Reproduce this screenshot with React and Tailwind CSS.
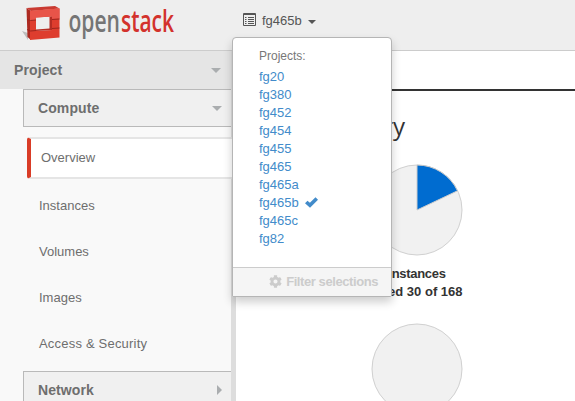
import { FaCog } from "react-icons/fa";

const projects = ["fg20", "fg380", "fg452", "fg454", "fg455", "fg465", "fg465a", "fg465b", "fg465c", "fg82"];

function Logo() {
  return (
    <svg className="block h-[50px] w-[190px] overflow-visible" viewBox="0 0 190 50">
      <path d="M22 31L28 33V40Z" fill="#bdbdbd" />
      <path d="M26.5 8L31 11V40L27.5 37Z" fill="#ad2a21" />
      <path d="M26.5 8L55 6L59.5 8.5L31 11Z" fill="#c93a31" />
      <path fillRule="evenodd" d="M30 11L59.5 8.5V37.5L30 40ZM36 17.5V31L52 30V16.5Z" fill="#de3d2e" />
      <path d="M30 11L59.5 8.5V18.5L52 19V16.5L36 17.5V20L30 20.5Z" fill="#e85449" />
      <path d="M49.5 17L52 16.5V30L36 31V29.5L49.5 28.5Z" fill="#b52d24" />
      <path d="M27 19.5L30.5 20.5L36 20M27 29.5L30.5 31L36 30.5M52 19.5L59.5 19M52 28.5L59.5 28" fill="none" stroke="#9c261e" />
      <text x="68.5" y="31.5" textLength="51.5" lengthAdjust="spacingAndGlyphs" fill="#757575" className="font-['Open_Sans',sans-serif] text-[31px] font-semibold">open</text>
      <text x="121" y="31.5" textLength="53" lengthAdjust="spacingAndGlyphs" fill="#d3322c" className="font-['Open_Sans',sans-serif] text-[31px] font-semibold">stack</text>
    </svg>
  );
}

function ProjectMenu() {
  return (
    <div className="absolute left-[232px] top-[37px] flex h-[260px] w-[160px] flex-col rounded-t-[4px] rounded-b-[2px] border border-[#b5b5b5] bg-white bg-clip-padding shadow-[0_5px_10px_rgba(0,0,0,0.2)]">
      <div className="pl-[26px] pt-[9px] text-[12px] leading-[18px] text-[#777]">Projects:</div>
      <ul className="flex-1 pl-[26px] pt-[3px]">
        {projects.map((name) => (
          <li key={name} className="flex h-[18px] items-center text-[13px] text-[#428bca]">
            {name}
            {name === "fg465b" && (
              <svg className="-mt-[2px] ml-[6px] h-[11px] w-[13px]" viewBox="0 0 13 11">
                <path d="M0 6.2L2.5 3.7L4.9 5.8L10.5 0.3L13 2.7L5 10.8Z" fill="#428bca" />
              </svg>
            )}
          </li>
        ))}
      </ul>
      <div className="flex h-[29px] items-center justify-end border-t border-[#ccc] bg-[#f5f5f5] pr-[13px] text-[13px] font-bold tracking-[-0.42px] text-[#ccc]">
        <FaCog className="-mt-[2px] mr-[4px] h-[13px] w-[13px]" />
        Filter selections
      </div>
    </div>
  );
}

function Quota({ used, children }) {
  return (
    <div className="flex w-[362px] flex-col items-center text-center text-[13px] font-bold leading-[18px] text-[#333]">
      <svg className="block h-[92px] w-[92px]" viewBox="0 0 92 92">
        <circle cx="46" cy="46" r="45" fill="#f1f1f1" stroke="#d0d0d0" />
        {used && <path d="M46 46V1A45 45 0 0 1 86.5 26.8Z" fill="#006cd0" stroke="#ccc" />}
      </svg>
      {children}
    </div>
  );
}

function SideHeading({ children, right }) {
  return (
    <div className="ml-[23px] flex h-[38px] shrink-0 items-center justify-between border border-r-0 border-[#b9b9b9] bg-[#f0f0f0] pl-[14px] pr-[9px] text-[14px] font-bold tracking-[0.1px] text-[#6e6e6e]">
      {children}
      {right ? (
        <span className="border-y-[5px] border-l-[5px] border-y-transparent border-l-[#aaadaf]" />
      ) : (
        <span className="border-x-[5px] border-t-[5px] border-x-transparent border-t-[#aaadaf]" />
      )}
    </div>
  );
}

export default function App() {
  return (
    <div className="relative flex h-[401px] w-[575px] flex-col overflow-hidden bg-white font-['Liberation_Sans',Arial,sans-serif]">
      <header className="flex h-[51px] shrink-0 border-b border-[#ccc] bg-[#eee]">
        <Logo />
        <div className="ml-[53px] flex h-[41px] items-center text-[13px] text-[#555]">
          <svg className="-mt-[2px] mr-[6px] h-[13px] w-[13px]" viewBox="0 0 13 13" fill="none" stroke="#555">
            <path d="M.5 .5H12.5V12.5H.5ZM.5 1.5H12.5M2 4.5H3.5M5 4.5H11M2 6.5H3.5M5 6.5H11M2 8.5H3.5M5 8.5H11M2 10.5H3.5M5 10.5H11" />
          </svg>
          <span className="mt-px">fg465b</span>
          <span className="ml-[6px] mt-[3px] border-x-[4px] border-t-[4px] border-x-transparent border-t-[#555]" />
        </div>
      </header>
      <div className="flex min-h-0 flex-1">
        <aside className="flex w-[236px] shrink-0 flex-col border-r-[5px] border-[#ddd] bg-[#f9f9f9]">
          <div className="flex h-[38px] shrink-0 items-center justify-between bg-[#e5e5e5] pl-[14px] pr-[10px] text-[14px] font-bold tracking-[0.1px] text-[#6e6e6e]">
            Project
            <span className="border-x-[5px] border-t-[5px] border-x-transparent border-t-[#aaadaf]" />
          </div>
          <SideHeading>Compute</SideHeading>
          <nav className="mt-[10px] flex shrink-0 flex-col text-[13px] text-[#6e6e6e]">
            <div className="-mr-[5px] ml-[27px] flex h-[42px] items-center rounded-l-[3px] border-y-2 border-l-4 border-y-[#e5e5e5] border-l-[#d93c27] bg-white pl-[10px]">Overview</div>
            <div className="mt-[4px] flex h-[46px] items-center pl-[39px]">Instances</div>
            <div className="flex h-[46px] items-center pl-[39px]">Volumes</div>
            <div className="flex h-[46px] items-center pl-[39px]">Images</div>
            <div className="flex h-[46px] items-center pl-[39px] tracking-[0.2px]">Access &amp; Security</div>
          </nav>
          <div className="mt-[4px]"><SideHeading right>Network</SideHeading></div>
        </aside>
        <main className="flex-1">
          <div className="h-[40px] border-b-2 border-[#333]" />
          <h1 className="mt-[19px] w-[167px] whitespace-nowrap text-right font-['Open_Sans',sans-serif] text-[24px] leading-[32px] text-[#333]">Limit Summary</h1>
          <div className="mt-[22px]">
            <Quota used>
              <div className="mt-[9px] tracking-[-0.3px]">Instances</div>
              <div>Used 30 of 168</div>
            </Quota>
          </div>
          <div className="mt-[22px]"><Quota /></div>
        </main>
      </div>
      <ProjectMenu />
    </div>
  );
}
